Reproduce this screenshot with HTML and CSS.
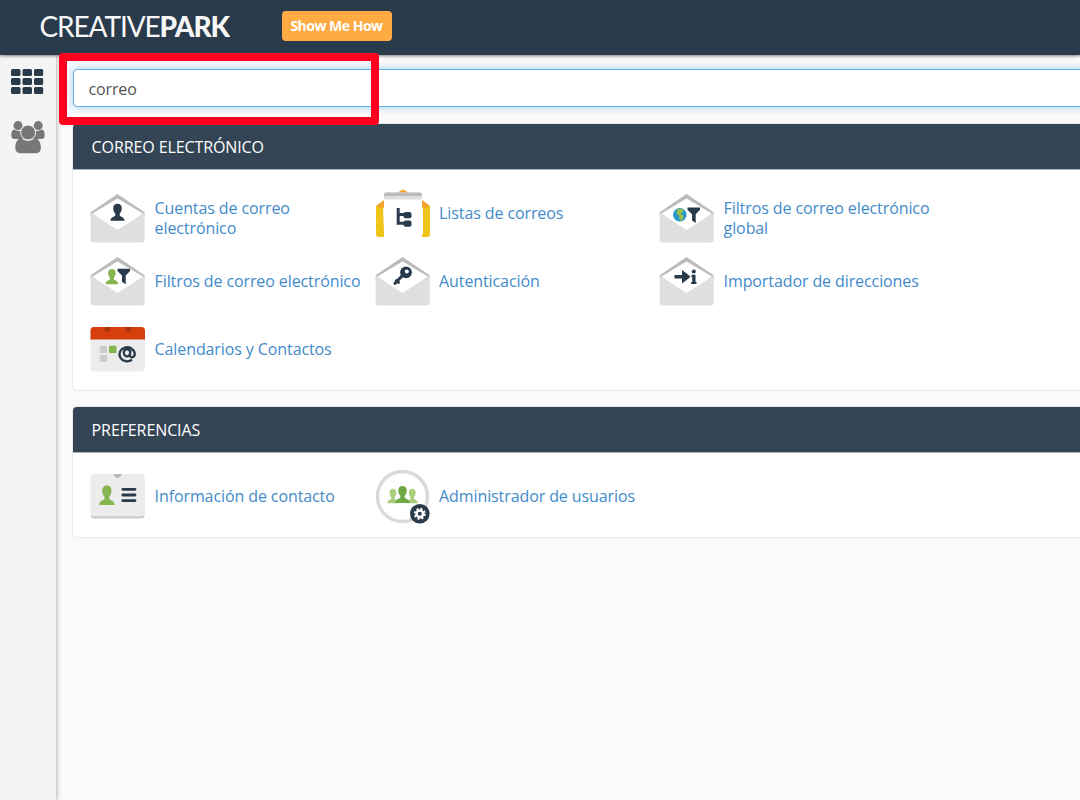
FILE: index.html
```html
<!DOCTYPE html>
<html lang="es">
<head>
<meta charset="utf-8">
<title>Creative Park</title>
<link rel="stylesheet" href="styles.css">
</head>
<body>
<svg class="defs" width="0" height="0">
  <defs>
    <g id="envelope">
      <path d="M.7 22.2 27.5 4 54.6 22.2V26H.7Z" fill="#bcbcbc"/>
      <path d="M2.500 23.600 27.500 8.600 53 23.600 27.500 42Z" fill="#fff"/>
      <path d="M.6 22.5 27.5 40 54.7 22.5V49.5q0 3-3 3H3.6q-3 0-3-3Z" fill="#dfdfdf"/>
    </g>
    <path id="person" d="M7 0c2.800 0 4.300 1.800 4.300 4.500 0 2.300-.8 4-2.100 5.300V11.600c.5 1.400 4.800 1.300 4.800 5.100V17H0v-.3c0-3.800 4.300-3.700 4.800-5.100V9.800C3.500 8.500 2.700 6.800 2.700 4.500 2.700 1.800 4.200 0 7 0Z"/>
    <path id="funnel" d="M0 0H12.500V2.300L8.200 6.800V15.500L4.500 13V6.800L0 2.300Z"/>
  </defs>
</svg>
<header class="topbar">
  <div class="logo" role="img" aria-label="CREATIVEPARK"><span>CREATIVE</span><b>PARK</b></div>
  <button class="show-how">Show Me How</button>
</header>
<div class="shell">
  <nav class="sidebar">
    <svg width="34" height="26" fill="#293a4a">
      <rect x="0" y="0" width="9.500" height="7" rx="1.500"/><rect x="11.500" y="0" width="9.500" height="7" rx="1.500"/><rect x="23" y="0" width="9.200" height="7" rx="1.500"/>
      <rect x="0" y="9" width="9.500" height="7" rx="1.500"/><rect x="11.500" y="9" width="9.500" height="7" rx="1.500"/><rect x="23" y="9" width="9.200" height="7" rx="1.500"/>
      <rect x="0" y="18" width="9.500" height="7" rx="1.500"/><rect x="11.500" y="18" width="9.500" height="7" rx="1.500"/><rect x="23" y="18" width="9.200" height="7" rx="1.500"/>
    </svg>
    <svg width="34" height="34" fill="#777">
      <circle cx="7" cy="4.600" r="4.500"/><circle cx="27.200" cy="4.600" r="4.500"/>
      <path d="M.3 14.500C.3 10 1.800 8.600 3.500 8.600c3 1.800 5 1.500 7 .8-.8 3.800 0 6.600 2 8.600H4Q.3 18 .3 14.500ZM33.700 14.500c0-4.500-1.500-5.900-3.200-5.900-3 1.800-5 1.500-7 .8.800 3.800 0 6.600-2 8.600H30Q33.700 18 33.700 14.500Z"/>
      <circle cx="17.100" cy="11.500" r="7.500" stroke="#f4f4f4"/>
      <path d="M10.300 17.600q6.800 4.800 13.600 0c4.200 0 6 4.500 6 9.500 0 3.500-2 5.100-4.700 5.100H9c-2.700 0-4.700-1.600-4.700-5.100 0-5 1.800-9.500 6-9.500Z"/>
    </svg>
  </nav>
  <main class="content">
    <div class="search">
      <input class="search-input" type="text" value="correo" aria-label="Buscar">
      <div class="highlight"></div>
    </div>
    <section class="panel">
      <h2 class="panel-title">CORREO ELECTRÓNICO</h2>
      <div class="grid">
        <a class="item item-tall"><svg class="icon" viewBox="0 0 56 56"><use href="#envelope"/><use href="#person" x="20.500" y="13.800" fill="#293a4a"/></svg><span>Cuentas de correo<br>electrónico</span></a>
        <a class="item"><svg class="icon" viewBox="0 0 56 56">
          <path d="M22 8 27.500 4.500Q28 4.300 28.500 4.500L34 8Z" fill="#f4a72c"/>
          <path d="M1 21 9 16V52H4Q1 52 1 49ZM55 21 47 16V52H52Q55 52 55 49Z" fill="#f0c419"/>
          <path d="M1.500 20.500 9 15V21L5.500 24ZM54.500 20.500 47 15V21L50.500 24Z" fill="#f2a431"/>
          <path d="M9 21V52H47V21Z" fill="#fff"/><path d="M8 23 11 25V22H45V25L48 23V48L46 52H10L9 48Z" fill="#fff"/>
          <path d="M9 14.500V9.500q0-2 2-2H45q2 0 2 2V14.500Z" fill="#dedede"/><path d="M9 11V9.500q0-2 2-2H45q2 0 2 2V11Z" fill="#bcbcbc"/>
          <path d="M23.200 23V38.300H30M23 29.500H30" fill="none" stroke="#293a4a" stroke-width="3"/>
          <rect x="28.500" y="27" width="8" height="6.200" rx="2" fill="#293a4a"/><rect x="28.500" y="35.500" width="8" height="6.200" rx="2" fill="#293a4a"/>
        </svg><span>Listas de correos</span></a>
        <a class="item item-tall"><svg class="icon" viewBox="0 0 56 56"><use href="#envelope"/>
          <circle cx="20.800" cy="24.700" r="6.800" fill="#2196cf"/><path d="M18.500 19 22 18.500 24.500 20 24 22.500 21.500 23.500 25 26 24 29 21.500 31 20 28.500 20.500 26 17.500 24Z" fill="#9bbb4b"/><use href="#funnel" x="28.500" y="17.500" fill="#293a4a"/>
        </svg><span>Filtros de correo electrónico<br>global</span></a>
        <a class="item"><svg class="icon" viewBox="0 0 56 56"><use href="#envelope"/><use href="#person" transform="translate(15.800 16) scale(.87 .89)" fill="#84b54f"/><use href="#funnel" x="27.500" y="15.800" fill="#293a4a"/></svg><span>Filtros de correo electrónico</span></a>
        <a class="item"><svg class="icon" viewBox="0 0 56 56"><use href="#envelope"/>
          <circle cx="31" cy="19.300" r="5.900" fill="#293a4a"/><circle cx="31.800" cy="18.500" r="2" fill="#fff"/><path d="m27.500 22.500-7.500 7.800M21.500 27.500l2 1.800" stroke="#293a4a" stroke-width="3" stroke-linecap="round"/>
        </svg><span>Autenticación</span></a>
        <a class="item"><svg class="icon" viewBox="0 0 56 56"><use href="#envelope"/>
          <path d="M15.500 22H23V17Q27.500 20 31.500 23.800 27.500 27.500 23 30.500V25.500H15.500Z" fill="#293a4a"/><circle cx="34.800" cy="18.500" r="2" fill="#293a4a"/><path d="M32.500 21.800H36.500V29H37.500V31H32.200V29H33.200V24H32.500Z" fill="#293a4a"/>
        </svg><span>Importador de direcciones</span></a>
        <a class="item"><svg class="icon" viewBox="0 0 56 56">
          <rect x=".5" y="6" width="54.500" height="44.500" rx="4" fill="#ececec"/><path d="M.5 18.600V9.500q0-3.500 3.500-3.500H51.500q3.500 0 3.500 3.500V18.600Z" fill="#d63f0c"/>
          <path d="M14.500 6H20V9q-2.700 4-5.500 0ZM35.500 6H41V9q-2.700 4-5.500 0Z" fill="#a9320d"/>
          <rect x="9.800" y="25" width="7.300" height="7" rx="1.200" fill="#ccc"/><rect x="19" y="24.800" width="7.500" height="7.200" rx="1.200" fill="#84b54f"/><rect x="9.800" y="34" width="7.300" height="7" rx="1.200" fill="#ccc"/>
          <path d="M42 38.700A7.700 7 0 1 1 44.800 32.500C44.800 37 39.700 37.600 39.900 34L40.500 29M39.900 33.300A3.200 3.600 0 1 1 40.200 31.700" fill="none" stroke="#293a4a" stroke-width="2.300"/>
        </svg><span>Calendarios y Contactos</span></a>
      </div>
    </section>
    <section class="panel">
      <h2 class="panel-title">PREFERENCIAS</h2>
      <div class="grid grid-last">
        <a class="item"><svg class="icon" viewBox="0 0 56 56">
          <rect x=".8" y="8" width="53.500" height="42.500" rx="3" fill="#ccc"/><rect x=".8" y="6" width="53.500" height="42.300" rx="3" fill="#ececec"/><path d="M24 6H31.300A3.700 4.500 0 0 1 24 6Z" fill="#b5b5b5"/>
          <use href="#person" transform="translate(9.300 17.500) scale(1.080 1.140)" fill="#84b54f"/><path d="M32.800 21.300H45M32.800 27H45M32.800 32.700H45" stroke="#293a4a" stroke-width="2.800" stroke-linecap="round"/>
        </svg><span>Información de contacto</span></a>
        <a class="item"><svg class="icon" viewBox="0 0 56 56">
          <circle cx="27.500" cy="28.500" r="25" fill="#fff" stroke="#dadada" stroke-width="3.500"/>
          <use href="#person" transform="translate(12.500 20.800) scale(.78 .85)" fill="#a9cd78"/><use href="#person" transform="translate(31.800 20.800) scale(.78 .85)" fill="#a9cd78"/><use href="#person" x="20.500" y="18" fill="#71a945"/>
          <circle cx="44.800" cy="45.800" r="9.800" fill="#293a4a"/><circle cx="44.800" cy="45.800" r="5.100" fill="none" stroke="#fff" stroke-width="1.800" stroke-dasharray="2.100 1.905"/><circle cx="44.800" cy="45.800" r="3.300" fill="none" stroke="#fff" stroke-width="2.600"/>
        </svg><span>Administrador de usuarios</span></a>
      </div>
    </section>
  </main>
</div>
</body>
</html>
```
FILE: styles.css
```css
* { box-sizing: border-box; }
body {
  margin: 0;
  height: 800px;
  overflow: hidden;
  display: flex;
  flex-direction: column;
  background: #fafafa;
  font-family: "Open Sans", sans-serif;
  font-size: 16px;
}
.defs { position: absolute; }
.topbar {
  flex: none;
  height: 55px;
  padding: 11px 0 0 39.500px;
  display: flex;
  align-items: flex-start;
  background: #293a4a;
  box-shadow: 0 1px 3px rgba(0, 0, 0, .5);
  z-index: 1;
}
.logo {
  width: 242px;
  color: #f7f7f7;
  font-family: Lato, sans-serif;
  font-size: 28px;
  line-height: 31px;
  letter-spacing: -1.1px;
  white-space: nowrap;
}
.logo b { font-weight: 900; letter-spacing: -1px; }
.show-how {
  width: 110px;
  height: 30px;
  padding: 0 0 2px;
  border: 0;
  border-radius: 4px;
  background: #ffaa42;
  color: #fff;
  font: bold 14px "Open Sans", sans-serif;
  letter-spacing: -.5px;
}
.shell { flex: 1; display: flex; }
.sidebar {
  flex: none;
  width: 56px;
  padding: 14px 0 0 11px;
  display: flex;
  flex-direction: column;
  gap: 26px;
  background: #f4f4f4;
  box-shadow: 0 0 5px rgba(0, 0, 0, .4);
}
.content {
  flex: 1;
  min-width: 0;
  padding: 14px 0 0 17.400px;
  display: flex;
  flex-direction: column;
}
.search { position: relative; margin-bottom: 17px; }
.search-input {
  display: block;
  width: 1024px;
  height: 38px;
  padding: 2px 14px 0;
  border: 1px solid #66afe9;
  border-radius: 4px;
  outline: 0;
  background: #fff;
  box-shadow: 0 0 8px rgba(102, 175, 233, .6);
  color: #555;
  font: 16px "Open Sans", sans-serif;
  letter-spacing: -.1px;
}
/* Red marker over the search box */
.highlight {
  position: absolute;
  z-index: 2;
  left: -14.400px;
  top: -16px;
  width: 320px;
  height: 72px;
  border: 8px solid #ff001f;
  border-radius: 4px;
}
.panel {
  width: 1024px;
  margin-bottom: 17px;
  border-radius: 4px;
  background: #fff;
  box-shadow: 0 0 2px rgba(0, 0, 0, .25);
}
.panel-title {
  margin: 0;
  height: 45px;
  padding-left: 18.200px;
  border-radius: 4px 4px 0 0;
  background: #334455;
  box-shadow: 0 1px 0 rgba(51, 68, 85, .4);
  color: #fff;
  font-size: 16px;
  font-weight: 400;
  line-height: 46px;
  letter-spacing: -.1px;
}
.grid {
  display: grid;
  grid-template-columns: repeat(3, 284.500px);
  grid-auto-rows: 68px;
  padding: 10px 0 7px 16.700px;
}
.grid-last { padding-bottom: 7px; }
.item {
  display: flex;
  align-items: center;
  gap: 8.500px;
  color: #428bca;
  line-height: 20px;
  letter-spacing: -.1px;
  white-space: nowrap;
}
.item-tall { padding-top: 9px; }
.icon { flex: none; width: 56px; height: 56px; }
```
